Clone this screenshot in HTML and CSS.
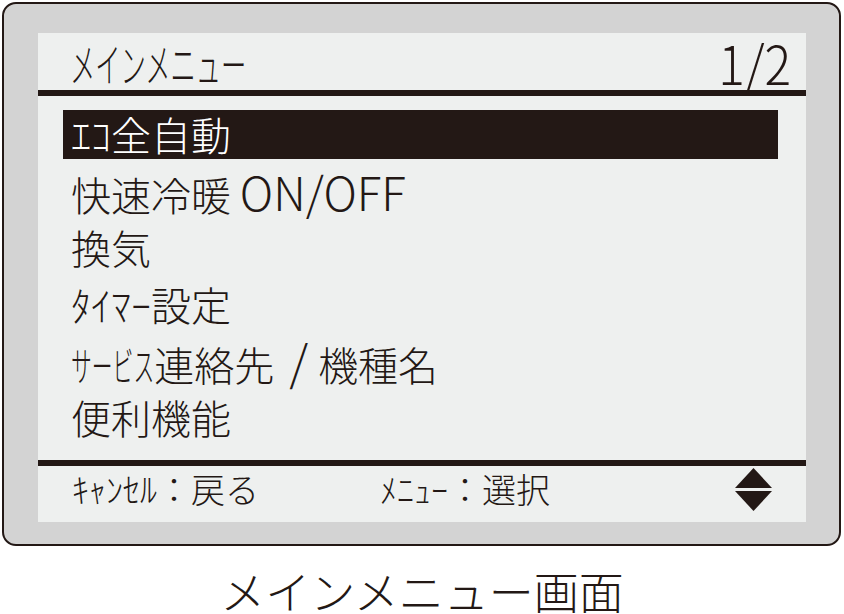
FILE: index.html
```html
<!DOCTYPE html>
<html lang="ja">
<head>
    <meta charset="UTF-8">
    <meta name="viewport" content="width=device-width, initial-scale=1.0">
    <title>メインメニュー画面</title>
    <link rel="stylesheet" href="styles.css">
</head>
<body>
    <div class="frame">
        <div class="screen">
            <div class="header">
                <span class="title">メインメニュー</span>
                <span class="page">1/2</span>
            </div>

            <!-- menu items, first one is the cursor -->
            <ul class="menu">
                <li class="item selected">ｴｺ全自動</li>
                <li class="item">快速冷暖 <span class="latin">ON/OFF</span></li>
                <li class="item">換気</li>
                <li class="item">ﾀｲﾏｰ設定</li>
                <li class="item"><span class="narrow">サービス</span>連絡先<span class="slash">/</span>機種名</li>
                <li class="item">便利機能</li>
            </ul>

            <div class="footer">
                <span class="hint hint-cancel">ｷｬﾝｾﾙ：戻る</span>
                <span class="hint">ﾒﾆｭｰ：選択</span>
                <svg class="updown" width="37" height="43" viewBox="0 0 37 43">
                    <polygon points="18.5,0 37,20 0,20" fill="#231815"/>
                    <polygon points="0,23 37,23 18.5,43" fill="#231815"/>
                </svg>
            </div>
        </div>
    </div>
    <p class="caption">メインメニュー画面</p>
</body>
</html>
```

FILE: styles.css
```css
* {
    box-sizing: border-box;
}
body {
    margin: 0;
    background: #fff;
    color: #231815;
    font-family: "Noto Sans CJK JP", sans-serif;
    font-weight: 300;
}
.frame {
    margin: 2px 0 0 2px;
    width: 839px;
    height: 544px;
    border: 2px solid #231815;
    border-radius: 14px;
    background: #d3d3d3;
    padding: 29px 33px 22px 34px;
}
.screen {
    height: 100%;
    background: #eef0ef;
    display: flex;
    flex-direction: column;
}
.header {
    height: 63px;
    border-bottom: 6px solid #231815;
    display: flex;
    justify-content: space-between;
    align-items: center;
    padding: 0 15px 0 32px;
}
.title {
    display: inline-block;
    font-size: 46px;
    line-height: 1;
    transform: scaleX(0.55);
    transform-origin: left center;
}
.page {
    display: inline-block;
    font-size: 54px;
    line-height: 1;
    transform: scaleX(0.92);
    transform-origin: right center;
}
.menu {
    flex: 1;
    list-style: none;
    margin: 14px 28px 0 25px;
    padding: 0;
    display: flex;
    flex-direction: column;
    gap: 7.6px;
}
.item {
    height: 49px;
    line-height: 49px;
    font-size: 40px;
    padding-left: 8px;
    white-space: nowrap;
}
.selected {
    background: #231815;
    color: #fff;
}
.latin {
    font-size: 46px;
}
.slash {
    font-size: 48px;
    margin: 0 10px 0 15px;
}
/* katakana squeezed to half width */
.narrow {
    display: inline-block;
    transform: scaleX(0.52);
    transform-origin: left center;
    margin-right: -1.92em;
}
.footer {
    height: 62px;
    border-top: 6px solid #231815;
    display: flex;
    align-items: center;
    padding: 0 34px 10px 34px;
}
.hint {
    font-size: 34px;
    line-height: 1;
    white-space: nowrap;
}
.hint-cancel {
    width: 308px;
}
.updown {
    margin-left: auto;
}
.caption {
    margin: 22px 0 0;
    text-align: center;
    font-size: 45px;
    line-height: 1;
}
```
